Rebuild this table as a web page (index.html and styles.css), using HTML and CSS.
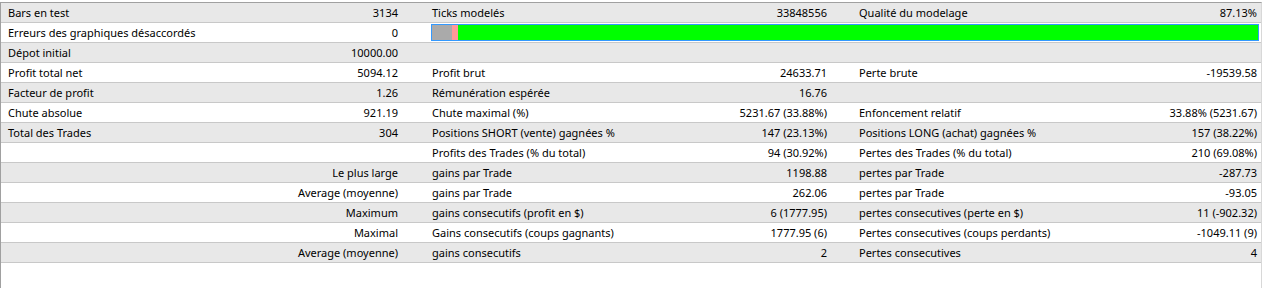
FILE: index.html
```html
<!DOCTYPE html>
<html lang="fr">
<head>
<meta charset="utf-8">
<title>Rapport</title>
<link rel="stylesheet" href="styles.css">
</head>
<body>
<div class="report">
  <div class="row"><span class="lbl">Bars en test</span><span class="val">3134</span><span class="lbl">Ticks modelés</span><span class="val">33848556</span><span class="lbl">Qualité du modelage</span><span class="val last">87.13%</span></div>
  <div class="row"><span class="lbl">Erreurs des graphiques désaccordés</span><span class="val">0</span>
    <div class="barcell"><div class="bar"><span class="seg gray"></span><span class="seg pink"></span><span class="seg green"></span></div></div>
  </div>
  <div class="row"><span class="lbl">Dépot initial</span><span class="val">10000.00</span><span class="lbl"></span><span class="val"></span><span class="lbl"></span><span class="val last"></span></div>
  <div class="row"><span class="lbl">Profit total net</span><span class="val">5094.12</span><span class="lbl">Profit brut</span><span class="val">24633.71</span><span class="lbl">Perte brute</span><span class="val last">-19539.58</span></div>
  <div class="row"><span class="lbl">Facteur de profit</span><span class="val">1.26</span><span class="lbl">Rémunération espérée</span><span class="val">16.76</span><span class="lbl"></span><span class="val last"></span></div>
  <div class="row"><span class="lbl">Chute absolue</span><span class="val">921.19</span><span class="lbl">Chute maximal (%)</span><span class="val">5231.67 (33.88%)</span><span class="lbl">Enfoncement relatif</span><span class="val last">33.88% (5231.67)</span></div>
  <div class="row"><span class="lbl">Total des Trades</span><span class="val">304</span><span class="lbl">Positions SHORT (vente) gagnées %</span><span class="val">147 (23.13%)</span><span class="lbl">Positions LONG (achat) gagnées %</span><span class="val last">157 (38.22%)</span></div>
  <div class="row"><span class="lbl"></span><span class="val"></span><span class="lbl">Profits des Trades (% du total)</span><span class="val">94 (30.92%)</span><span class="lbl">Pertes des Trades (% du total)</span><span class="val last">210 (69.08%)</span></div>
  <div class="row"><span class="lbl"></span><span class="val">Le plus large</span><span class="lbl">gains par Trade</span><span class="val">1198.88</span><span class="lbl">pertes par Trade</span><span class="val last">-287.73</span></div>
  <div class="row"><span class="lbl"></span><span class="val">Average (moyenne)</span><span class="lbl">gains par Trade</span><span class="val">262.06</span><span class="lbl">pertes par Trade</span><span class="val last">-93.05</span></div>
  <div class="row"><span class="lbl"></span><span class="val">Maximum</span><span class="lbl">gains consecutifs (profit en $)</span><span class="val">6 (1777.95)</span><span class="lbl">pertes consecutives (perte en $)</span><span class="val last">11 (-902.32)</span></div>
  <div class="row"><span class="lbl"></span><span class="val">Maximal</span><span class="lbl">Gains consecutifs (coups gagnants)</span><span class="val">1777.95 (6)</span><span class="lbl">Pertes consecutives (coups perdants)</span><span class="val last">-1049.11 (9)</span></div>
  <div class="row"><span class="lbl"></span><span class="val">Average (moyenne)</span><span class="lbl">gains consecutifs</span><span class="val">2</span><span class="lbl">Pertes consecutives</span><span class="val last">4</span></div>
</div>
</body>
</html>
```
FILE: styles.css
```css
html, body {
  margin: 0;
  padding: 0;
  background: #ffffff;
}

body {
  font-family: "Noto Sans", "DejaVu Sans", sans-serif;
  font-size: 11px;
  color: #000000;
}

.report {
  margin-top: 2px;
  width: 1260px;
  height: 285px;
  border-top: 1px solid #a0a0a0;
  border-left: 1px solid #a0a0a0;
  border-right: 1px solid #d8d8d8;
  background: #ffffff;
}

.row {
  display: grid;
  grid-template-columns: 200px 224px 200px 227px 200px 209px;
  height: 19px;
  border-bottom: 1px solid #c8c8c8;
  background: #ffffff;
}

.row:nth-child(odd) {
  background: #e8e8e8;
}

.lbl, .val {
  display: flex;
  align-items: center;
  white-space: nowrap;
  line-height: 19px;
}

.lbl {
  padding-left: 7px;
}

.val {
  justify-content: flex-end;
  padding-right: 27px;
}

.row .val:nth-child(4) {
  padding-right: 25px;
}

.val.last {
  padding-right: 4px;
}

.barcell {
  grid-column: 3 / span 4;
  display: flex;
  align-items: center;
  padding: 0 2px 0 6px;
}

.bar {
  flex: 1;
  height: 15px;
  border: 1px solid #3399ff;
  display: flex;
}

.seg {
  display: block;
  height: 100%;
}

.seg.gray {
  width: 20px;
  background: #aaaaaa;
}

.seg.pink {
  width: 6px;
  background: #ff9999;
}

.seg.green {
  flex: 1;
  background: #00ff00;
}
```
